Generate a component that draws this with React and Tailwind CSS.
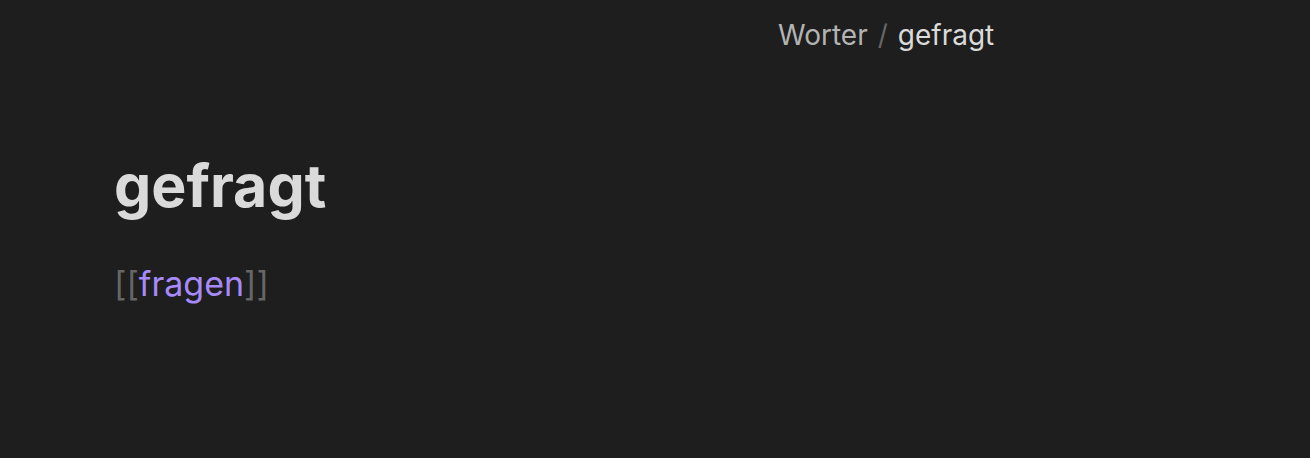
export default function App() {
  return (
    <div
      className="w-[1310px] h-[458px] bg-[#1e1e1e] overflow-hidden"
      style={{ fontFamily: "Inter, 'Noto Sans', sans-serif" }}
    >
      <div className="h-[70px] flex items-center pl-[778px]">
        <div className="flex items-center text-[28px] gap-[10px]">
          <span className="text-[#b3b3b3]">Worter</span>
          <span className="text-[#666666]">/</span>
          <span className="text-[#dadada]">gefragt</span>
        </div>
      </div>
      <div className="pl-[114px] pt-[81px]">
        <h1 className="text-[59px] font-bold text-[#dadada] leading-[1.2]">gefragt</h1>
        <div className="mt-[36px] text-[34px] leading-[1.5]">
          <span className="text-[#666666]">[[</span>
          <span className="text-[#a68af9]">fragen</span>
          <span className="text-[#666666]">]]</span>
        </div>
      </div>
    </div>
  );
}
